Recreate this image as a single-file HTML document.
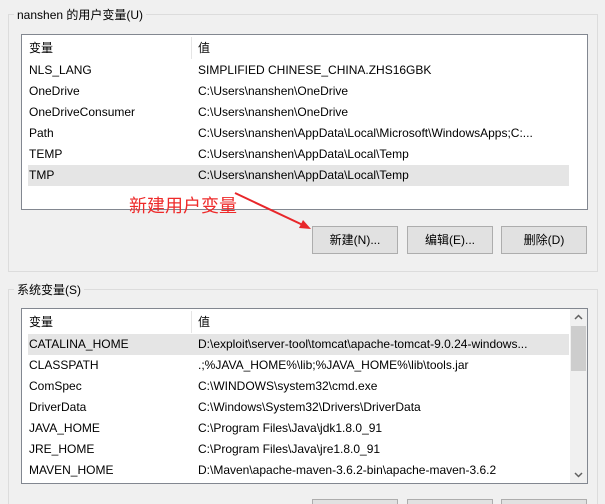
<!DOCTYPE html>
<html><head><meta charset="utf-8"><style>
*{margin:0;padding:0;box-sizing:border-box}
html{width:605px;height:504px;overflow:hidden}
body{width:605px;height:504px;background:#f0f0f0;position:relative;overflow:hidden;font-family:"Liberation Sans","Noto Sans CJK SC",sans-serif;font-size:12px;color:#000}
.a{position:absolute;white-space:nowrap}
.grp{position:absolute;border:1px solid #dcdcdc}
.lbl{position:absolute;background:#f0f0f0;padding:0 3px;line-height:16px}
.list{position:absolute;background:#fff;border:1px solid #828790}
.row{position:absolute;left:6px;height:21px;line-height:21px}
.hl{background:#e5e5e5}
.btn{position:absolute;height:28px;background:#e1e1e1;border:1px solid #adadad;text-align:center;line-height:26px}
</style></head><body>
<div class="grp" style="left:8px;top:14px;width:590px;height:258px"></div>
<div class="lbl" style="left:14px;top:7px">nanshen 的用户变量(U)</div>
<div class="list" style="left:21px;top:34px;width:567px;height:176px">
 <div class="a" style="left:169px;top:2px;width:1px;height:22px;background:#e5e5e5"></div>
 <div class="a" style="left:7px;top:3px;line-height:20px">变量</div>
 <div class="a" style="left:176px;top:3px;line-height:20px">值</div>
 <div class="row" style="top:25px;width:541px"><span class="a" style="left:1px">NLS_LANG</span><span class="a" style="left:170px">SIMPLIFIED CHINESE_CHINA.ZHS16GBK</span></div>
 <div class="row" style="top:46px;width:541px"><span class="a" style="left:1px">OneDrive</span><span class="a" style="left:170px">C:\Users\nanshen\OneDrive</span></div>
 <div class="row" style="top:67px;width:541px"><span class="a" style="left:1px">OneDriveConsumer</span><span class="a" style="left:170px">C:\Users\nanshen\OneDrive</span></div>
 <div class="row" style="top:88px;width:541px"><span class="a" style="left:1px">Path</span><span class="a" style="left:170px">C:\Users\nanshen\AppData\Local\Microsoft\WindowsApps;C:...</span></div>
 <div class="row" style="top:109px;width:541px"><span class="a" style="left:1px">TEMP</span><span class="a" style="left:170px">C:\Users\nanshen\AppData\Local\Temp</span></div>
 <div class="row hl" style="top:130px;width:541px"><span class="a" style="left:1px">TMP</span><span class="a" style="left:170px">C:\Users\nanshen\AppData\Local\Temp</span></div>
</div>
<div class="a" style="left:129px;top:196px;font-size:18px;color:#ee2a2a;line-height:20px">新建用户变量</div>
<svg class="a" style="left:0;top:0" width="605" height="504"><line x1="235" y1="193" x2="305" y2="226" stroke="#e8262a" stroke-width="2"/><polygon points="311,229 299,228 303,220" fill="#e8262a"/></svg>
<div class="btn" style="left:312px;top:226px;width:86px">新建(N)...</div>
<div class="btn" style="left:407px;top:226px;width:86px">编辑(E)...</div>
<div class="btn" style="left:501px;top:226px;width:86px">删除(D)</div>

<div class="grp" style="left:8px;top:289px;width:590px;height:230px"></div>
<div class="lbl" style="left:14px;top:282px">系统变量(S)</div>
<div class="list" style="left:21px;top:308px;width:567px;height:176px">
 <div class="a" style="left:169px;top:2px;width:1px;height:22px;background:#e5e5e5"></div>
 <div class="a" style="left:7px;top:3px;line-height:20px">变量</div>
 <div class="a" style="left:176px;top:3px;line-height:20px">值</div>
 <div class="row hl" style="top:25px;width:541px"><span class="a" style="left:1px">CATALINA_HOME</span><span class="a" style="left:170px">D:\exploit\server-tool\tomcat\apache-tomcat-9.0.24-windows...</span></div>
 <div class="row" style="top:46px"><span class="a" style="left:1px">CLASSPATH</span><span class="a" style="left:170px">.;%JAVA_HOME%\lib;%JAVA_HOME%\lib\tools.jar</span></div>
 <div class="row" style="top:67px"><span class="a" style="left:1px">ComSpec</span><span class="a" style="left:170px">C:\WINDOWS\system32\cmd.exe</span></div>
 <div class="row" style="top:88px"><span class="a" style="left:1px">DriverData</span><span class="a" style="left:170px">C:\Windows\System32\Drivers\DriverData</span></div>
 <div class="row" style="top:109px"><span class="a" style="left:1px">JAVA_HOME</span><span class="a" style="left:170px">C:\Program Files\Java\jdk1.8.0_91</span></div>
 <div class="row" style="top:130px"><span class="a" style="left:1px">JRE_HOME</span><span class="a" style="left:170px">C:\Program Files\Java\jre1.8.0_91</span></div>
 <div class="row" style="top:151px"><span class="a" style="left:1px">MAVEN_HOME</span><span class="a" style="left:170px">D:\Maven\apache-maven-3.6.2-bin\apache-maven-3.6.2</span></div>
 <div class="a" style="left:548px;top:0;width:17px;height:174px;background:#f0f0f0"></div>
 <div class="a" style="left:549px;top:17px;width:15px;height:45px;background:#cdcdcd"></div>
 <svg class="a" style="left:548px;top:0" width="17" height="174"><polyline points="5,10 8.5,6.5 12,10" fill="none" stroke="#606060" stroke-width="1.5"/><polyline points="5,164 8.5,167.5 12,164" fill="none" stroke="#606060" stroke-width="1.5"/></svg>
</div>
<div class="btn" style="left:312px;top:499px;width:86px"></div>
<div class="btn" style="left:407px;top:499px;width:86px"></div>
<div class="btn" style="left:501px;top:499px;width:86px"></div>
</body></html>
